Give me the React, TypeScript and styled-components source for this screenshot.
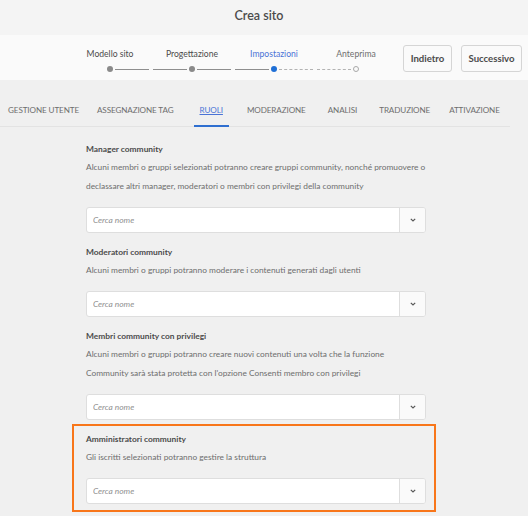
import React from "react";
import styled, { createGlobalStyle, css } from "styled-components";

const Global = createGlobalStyle`
  html, body { margin: 0; padding: 0; }
  body {
    background: #f0f0f0;
    font-family: Lato, "Open Sans", sans-serif;
    color: #4b4b4b;
    -webkit-font-smoothing: antialiased;
  }
`;

const Page = styled.div`
  width: 528px;
  min-height: 516px;
  background: #f0f0f0;
  overflow: hidden;
`;

const TitleBar = styled.header`
  height: 35px;
  background: #f4f4f4;
  display: flex;
  align-items: center;
  justify-content: center;
`;

const Title = styled.h1`
  margin: 0 0 5px 0;
  font-size: 12.5px;
  font-weight: 600;
  color: #4b4b4b;
  padding-right: 10px;
`;

const StepBar = styled.div`
  height: 45px;
  background: #fafafa;
  display: flex;
  align-items: center;
  padding-left: 69px;
  padding-right: 6px;
`;

const Stepper = styled.ol`
  list-style: none;
  margin: 0;
  padding: 0;
  display: flex;
  align-self: stretch;
  padding-top: 12px;
`;

const Step = styled.li`
  width: 82px;
  display: flex;
  flex-direction: column;
  align-items: center;
`;

const StepLabel = styled.span<{ $state: "done" | "active" | "todo" }>`
  font-size: 8.6px;
  line-height: 14px;
  white-space: nowrap;
  color: ${(p) =>
    p.$state === "active" ? "#4a73d6" : p.$state === "done" ? "#4b4b4b" : "#6e6e6e"};
`;

const Track = styled.div`
  margin-top: 5px;
  width: 100%;
  height: 6px;
  display: flex;
  align-items: center;
`;

const Segment = styled.span<{ $kind: "solid" | "dashed" | "none" }>`
  flex: 1;
  height: 0;
  ${(p) =>
    p.$kind === "solid" &&
    css`
      border-top: 1px solid #8e8e8e;
    `}
  ${(p) =>
    p.$kind === "dashed" &&
    css`
      border-top: 1px dashed #b3b3b3;
    `}
  margin: 0 2px;
`;

const Dot = styled.span<{ $state: "done" | "active" | "todo" }>`
  width: 6px;
  height: 6px;
  border-radius: 50%;
  box-sizing: border-box;
  flex: none;
  ${(p) =>
    p.$state === "done"
      ? css`
          background: #8a8a8a;
        `
      : p.$state === "active"
      ? css`
          background: #1f6fd6;
        `
      : css`
          background: transparent;
          border: 1px solid #a8a8a8;
        `}
`;

const Actions = styled.div`
  margin-left: auto;
  display: flex;
  gap: 9px;
  margin-top: 2px;
`;

const Button = styled.button<{ $w: number }>`
  width: ${(p) => p.$w}px;
  height: 27px;
  padding: 0;
  background: #fafafa;
  border: 1px solid #d5d5d5;
  border-radius: 3px;
  font-family: Lato, "Open Sans", sans-serif;
  font-size: 9.6px;
  font-weight: 700;
  color: #4b4b4b;
  cursor: pointer;
`;

const Tabs = styled.nav`
  height: 46px;
  margin-right: 18px;
  border-bottom: 1px solid #e3e3e3;
  display: flex;
  align-items: stretch;
  padding-left: 2px;
  gap: 10px;
`;

const Tab = styled.a<{ $active?: boolean; $nudge?: number }>`
  display: flex;
  align-items: center;
  padding: 14px 6px 0;
  margin-left: ${(p) => p.$nudge ?? 0}px;
  font-size: 8.1px;
  letter-spacing: -0.1px;
  color: #6e6e6e;
  text-transform: uppercase;
  white-space: nowrap;
  border-bottom: 2px solid transparent;
  margin-bottom: -1px;
  ${(p) =>
    p.$active &&
    css`
      color: #4a73d6;
      text-decoration: underline;
      border-bottom-color: #2f6fd0;
    `}
`;

const Content = styled.main`
  width: 340px;
  margin-left: 86px;
  padding-top: 13px;
  display: flex;
  flex-direction: column;
  gap: 10px;
`;

const Section = styled.section<{ $highlight?: boolean }>`
  position: relative;
  ${(p) =>
    p.$highlight &&
    css`
      &::after {
        content: "";
        position: absolute;
        top: -6px;
        left: -14px;
        right: -10px;
        bottom: -8px;
        border: 2px solid #f8761a;
        pointer-events: none;
      }
    `}
`;

const SectionTitle = styled.h2`
  margin: 0;
  font-size: 8.4px;
  line-height: 18px;
  font-weight: 700;
  color: #4b4b4b;
  white-space: nowrap;
`;

const Description = styled.p`
  margin: 0;
  font-size: 8.35px;
  line-height: 19px;
  color: #6e6e6e;
  white-space: nowrap;
`;

const Field = styled.div`
  margin-top: 11px;
  height: 26px;
  box-sizing: border-box;
  display: flex;
  background: #ffffff;
  border: 1px solid #dedede;
  border-radius: 3px;
  overflow: hidden;
`;

const Input = styled.input`
  flex: 1;
  min-width: 0;
  border: none;
  outline: none;
  background: transparent;
  padding: 0 6px;
  font-family: Lato, "Open Sans", sans-serif;
  font-size: 8.4px;
  font-style: italic;
  color: #4b4b4b;
  &::placeholder {
    color: #8f8f8f;
    font-style: italic;
  }
`;

const Toggle = styled.button`
  width: 26px;
  flex: none;
  border: none;
  border-left: 1px solid #dedede;
  background: #fafafa;
  display: flex;
  align-items: center;
  justify-content: center;
  padding: 0;
`;

const Chevron = () => (
  <svg width="6" height="4" viewBox="0 0 6 4" aria-hidden>
    <path d="M0.8 0.8 L3 3 L5.2 0.8" fill="none" stroke="#5a5a5a" strokeWidth="1.2" />
  </svg>
);

type StepState = "done" | "active" | "todo";
const steps = ["Modello sito", "Progettazione", "Impostazioni", "Anteprima"];
const activeStep = 2;

const tabs: { label: string; nudge?: number }[] = [
  { label: "Gestione utente" },
  { label: "Assegnazione tag", nudge: -4 },
  { label: "Ruoli", nudge: 4 },
  { label: "Moderazione", nudge: 2 },
  { label: "Analisi" },
  { label: "Traduzione" },
  { label: "Attivazione", nudge: -3 },
];

const sections: { title: string; lines: string[]; highlight?: boolean }[] = [
  {
    title: "Manager community",
    lines: [
      "Alcuni membri o gruppi selezionati potranno creare gruppi community, nonché promuovere o",
      "declassare altri manager, moderatori o membri con privilegi della community",
    ],
  },
  {
    title: "Moderatori community",
    lines: ["Alcuni membri o gruppi potranno moderare i contenuti generati dagli utenti"],
  },
  {
    title: "Membri community con privilegi",
    lines: [
      "Alcuni membri o gruppi potranno creare nuovi contenuti una volta che la funzione",
      "Community sarà stata protetta con l'opzione Consenti membro con privilegi",
    ],
  },
  {
    title: "Amministratori community",
    lines: ["Gli iscritti selezionati potranno gestire la struttura"],
    highlight: true,
  },
];

export default function App() {
  return (
    <Page>
      <Global />
      <TitleBar>
        <Title>Crea sito</Title>
      </TitleBar>
      <StepBar>
        <Stepper>
          {steps.map((s, i) => {
            const state: StepState = i < activeStep ? "done" : i === activeStep ? "active" : "todo";
            const left = i === 0 ? "none" : i <= activeStep ? "solid" : "dashed";
            const right = i === steps.length - 1 ? "none" : i < activeStep ? "solid" : "dashed";
            return (
              <Step key={s}>
                <StepLabel $state={state}>{s}</StepLabel>
                <Track>
                  <Segment $kind={left} />
                  <Dot $state={state} />
                  <Segment $kind={right} />
                </Track>
              </Step>
            );
          })}
        </Stepper>
        <Actions>
          <Button $w={49}>Indietro</Button>
          <Button $w={61}>Successivo</Button>
        </Actions>
      </StepBar>
      <Tabs>
        {tabs.map((t) => (
          <Tab key={t.label} $active={t.label === "Ruoli"} $nudge={t.nudge}>
            {t.label}
          </Tab>
        ))}
      </Tabs>
      <Content>
        {sections.map((s) => (
          <Section key={s.title} $highlight={s.highlight}>
            <SectionTitle>{s.title}</SectionTitle>
            {s.lines.map((l) => (
              <Description key={l}>{l}</Description>
            ))}
            <Field>
              <Input placeholder="Cerca nome" />
              <Toggle>
                <Chevron />
              </Toggle>
            </Field>
          </Section>
        ))}
      </Content>
    </Page>
  );
}
